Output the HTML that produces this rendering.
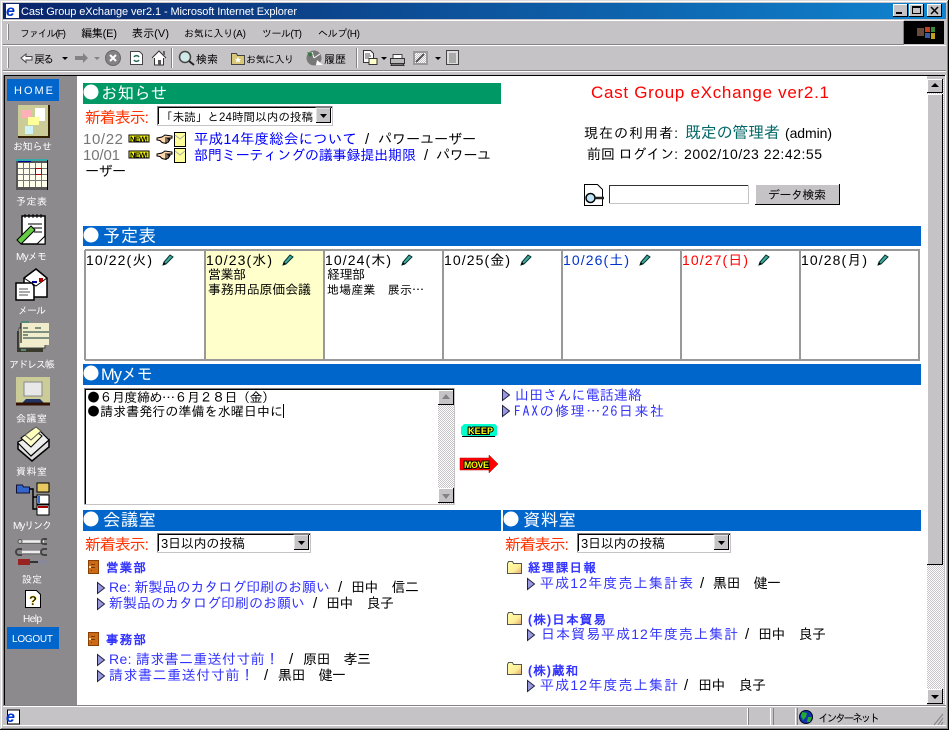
<!DOCTYPE html>
<html lang="ja"><head><meta charset="utf-8"><title>Cast Group eXchange ver2.1</title>
<style>
html,body{margin:0;padding:0;width:949px;height:730px;overflow:hidden;background:#c6c3c6}
svg{display:block}
text{font-family:"Liberation Sans","IPAGothic","Noto Sans CJK JP",sans-serif;white-space:pre}
.cjk{font-family:"IPAGothic","Noto Sans CJK JP",sans-serif}
.s10{font-size:10px}.s11{font-size:11px}.s115{font-size:11.5px}.s12{font-size:12px}.s13{font-size:13px}.s14{font-size:14px}.s145{font-size:14.5px}.s15{font-size:15px}.s16{font-size:16px}.s17{font-size:17px}
.w{fill:#fff}.k{fill:#000}.l{fill:#0000ff}.m{fill:#3333ff}.o{fill:#ff3300}.g{fill:#777}
.b{font-weight:bold;fill:#3333ff;font-size:12.5px}
.h{fill:#fff;font-size:17.5px}
.lab{font-weight:bold;fill:#ffff00;stroke:#000;stroke-width:2px;paint-order:stroke;font-size:9px}
.nw{font-weight:bold;fill:#000;font-size:7.5px}
</style></head><body>
<svg width="949" height="730" viewBox="0 0 949 730" xmlns="http://www.w3.org/2000/svg">
<defs>
<linearGradient id="tb" x1="0" x2="1" y1="0" y2="0"><stop offset="0" stop-color="#0a246a"/><stop offset="1" stop-color="#1084d0"/></linearGradient>
<linearGradient id="fg" x1="0" x2="1" y1="0" y2="1"><stop offset="0" stop-color="#ffffaa"/><stop offset=".6" stop-color="#ffee99"/><stop offset="1" stop-color="#dda870"/></linearGradient>
<pattern id="dith" width="2" height="2" patternUnits="userSpaceOnUse"><rect width="2" height="2" fill="#fff"/><rect width="1" height="1" fill="#c6c3c6"/><rect x="1" y="1" width="1" height="1" fill="#c6c3c6"/></pattern>
<g id="pen"><path d="M1 11l1-3 6-7 3 2-7 7z" fill="#44aa99" stroke="#003333" stroke-width="1"/><path d="M1 11l1-3 2 2z" fill="#000"/></g>
<g id="tri"><path d="M.5 .5l7 5.500-7 5.500z" fill="#9999dd" stroke="#222244" stroke-width="1"/></g>
<g id="hand"><path d="M0 4l5-1 3-2 7 1v2l-4 .5 2 1-1 1.500-1 1-2 1.500-4-1-2-2-3-.5z" fill="#ffd8b0" stroke="#000"/><path d="M8 4h7M8 6h5M8 8h4" stroke="#000"/></g>
<g id="env"><rect x=".5" y=".5" width="11" height="14" fill="#ffff99" stroke="#000"/><path d="M1 3l5 4 5-4" fill="none" stroke="#aaa"/></g>
<g id="door"><rect x="0" y="0" width="11" height="14" fill="#8a4000"/><rect x="1" y="1" width="9" height="12" fill="#cc6a18"/><path d="M3 4.500h4M3 7.500h4M3 10.500h1" stroke="#7a3a00"/><rect x="1" y="6" width="2" height="2" fill="#ffddaa"/></g>
<g id="fold"><path d="M.5 12.500v-10l1-2h4l1 2h8v10z" fill="url(#fg)" stroke="#555"/></g>
<g id="selbtn"><rect width="15" height="15" fill="#c6c3c6"/><path d="M0 15V0h15" fill="none" stroke="#fff"/><path d="M0 14.500h15M14.500 0v15" stroke="#000"/><path d="M4 6h7l-3.500 4z" fill="#000"/></g>
</defs>

<!-- window frame -->
<rect width="949" height="730" fill="#c6c3c6"/>
<path d="M.5 729V.5H948" fill="none" stroke="#ddd"/>
<path d="M0 729.500h949M948.500 0v730" stroke="#000"/>
<path d="M1.500 728V1.500H947" fill="none" stroke="#fff"/>
<path d="M1 728.500h947M947.500 1v728" stroke="#848284"/>

<!-- title bar -->
<rect x="3" y="3" width="943" height="16" fill="url(#tb)"/>
<rect x="6" y="4" width="13" height="14" fill="#fff"/>
<text x="6" y="16" font-size="16" font-weight="bold" fill="#0033cc" font-style="italic">e</text>
<text x="21" y="15" class="s11 w" textLength="276">Cast Group eXchange ver2.1 - Microsoft Internet Explorer</text>
<g>
<rect x="893" y="4" width="15" height="13" fill="#c6c3c6"/><path d="M893.500 16.500v-12h14" fill="none" stroke="#fff"/><path d="M893 16.500h15M907.500 4v13" stroke="#000"/><rect x="896" y="12" width="6" height="2" fill="#000"/>
<rect x="909" y="4" width="15" height="13" fill="#c6c3c6"/><path d="M909.500 16.500v-12h14" fill="none" stroke="#fff"/><path d="M909 16.500h15M923.500 4v13" stroke="#000"/><rect x="912.500" y="6.500" width="8" height="7" fill="none" stroke="#000"/><rect x="912" y="6" width="9" height="2" fill="#000"/>
<rect x="927" y="4" width="15" height="13" fill="#c6c3c6"/><path d="M927.500 16.500v-12h14" fill="none" stroke="#fff"/><path d="M927 16.500h15M941.500 4v13" stroke="#000"/><path d="M931 7l7 7M938 7l-7 7" stroke="#000" stroke-width="1.500"/>
</g>

<!-- menu bar -->
<path d="M3 20.500h901" stroke="#fff"/>
<path d="M3 44.500h901" stroke="#848284"/><path d="M3 45.500h943" stroke="#fff"/>
<path d="M7.500 24v16" stroke="#fff"/><path d="M8.500 24v16" stroke="#848284"/>
<text x="20" y="37" class="s10 k" textLength="46">ファイル(F)</text>
<text x="81" y="37" class="s11 k" textLength="36">編集(E)</text>
<text x="132" y="37" class="s11 k" textLength="37">表示(V)</text>
<text x="184" y="37" class="s10 k" textLength="62">お気に入り(A)</text>
<text x="262" y="37" class="s10 k" textLength="40">ツール(T)</text>
<text x="318" y="37" class="s10 k" textLength="42">ヘルプ(H)</text>
<rect x="904" y="21" width="40" height="23" fill="#000"/>
<rect x="917" y="28" width="7" height="8" fill="#6a4a3a"/><rect x="925" y="27" width="5" height="5" fill="#c04020"/><rect x="931" y="27" width="4" height="5" fill="#3a8a3a"/><rect x="925" y="33" width="5" height="5" fill="#3a5aa0"/><rect x="931" y="33" width="4" height="6" fill="#c0a020"/>
<path d="M903.500 21v23" stroke="#848284"/>

<!-- toolbar -->
<path d="M7.500 48v20" stroke="#fff"/><path d="M8.500 48v20" stroke="#848284"/>
<path d="M3 70.500h943" stroke="#848284"/><path d="M3 71.500h943" stroke="#fff"/>
<path d="M21 58l5-4v2.500h6v3.500h-6v2.500z" fill="#fff" stroke="#444"/>
<text x="34" y="63" class="s11 k" textLength="20">戻る</text>
<path d="M62 57h6l-3 3z" fill="#000"/>
<path d="M88 58l-5-5v3h-8v4h8v3z" fill="#848284"/>
<path d="M94 57h6l-3 3z" fill="#848284"/>
<circle cx="113" cy="58" r="7.500" fill="#848284" stroke="#666"/><path d="M110 55l6 6M116 55l-6 6" stroke="#fff" stroke-width="2"/>
<path d="M130.500 51.500h9l3 3v10h-12z" fill="#fff" stroke="#444"/><path d="M134 57a3 3 0 0 1 5 0M139 60a3 3 0 0 1-5 0" fill="none" stroke="#2a6a5a" stroke-width="1.500"/>
<path d="M152 58l7-7 7 7M154.500 58v7h9v-7" fill="#fff" stroke="#333"/><rect x="163" y="51" width="2" height="4" fill="#666"/><rect x="158" y="60" width="3" height="5" fill="#555"/>
<path d="M171.500 48v20" stroke="#848284"/><path d="M172.500 48v20" stroke="#fff"/>
<circle cx="185" cy="57" r="5.500" fill="#d0e8e8" stroke="#444" stroke-width="1.500"/><path d="M189 61l5 4" stroke="#222" stroke-width="2"/>
<text x="196" y="63" class="s11 k" textLength="22">検索</text>
<path d="M231.500 53.500h5l1 2h7v9h-13z" fill="#d8c878" stroke="#444"/><path d="M238 57l1 2h2l-1.500 1.500.5 2-2-1-2 1 .5-2-1.500-1.500h2z" fill="#fff"/>
<text x="246" y="63" class="s10 k" textLength="48">お気に入り</text>
<circle cx="314" cy="58" r="7.500" fill="#777"/><path d="M314 58l6-4M314 58l-2-6" stroke="#fff"/><path d="M307 52l6 2-3 3z" fill="#2a7a3a"/><path d="M317 60l6 5h-7z" fill="#fff"/>
<text x="324" y="63" class="s11 k" textLength="22">履歴</text>
<path d="M356.500 48v20" stroke="#848284"/><path d="M357.500 48v20" stroke="#fff"/>
<path d="M363.500 50.500h7l3 3v9h-10z" fill="#fff" stroke="#333"/><path d="M365 54h5M365 56h6M365 58h4" stroke="#555"/><path d="M369 58.500h8v6h-8z" fill="#ffffcc" stroke="#333"/><path d="M381 57h6l-3 3z" fill="#000"/>
<path d="M393 54.500h9v4h-9z" fill="#fff" stroke="#444"/><path d="M390.500 58.500h14v5h-14z" fill="#bbb" stroke="#333"/><path d="M392 63.500h11l1 2h-13z" fill="#777" stroke="#333"/>
<rect x="413" y="51" width="15" height="14" fill="#999"/><rect x="415" y="53" width="11" height="10" fill="url(#dith)"/><path d="M416 62l8-8" stroke="#555" stroke-width="2"/>
<path d="M435 57h6l-3 3z" fill="#000"/>
<path d="M446.500 50.500h12v14h-12z" fill="#ddd" stroke="#444"/><path d="M449 54h7M449 56h7M449 58h7M449 60h7M449 62h7" stroke="#777"/>

<!-- content frame -->
<path d="M3.500 75V708" stroke="#848284"/>
<path d="M4 75.500h942" stroke="#000"/><path d="M4.500 76v632" stroke="#000"/>
<path d="M945.500 75v633" stroke="#fff"/>
<rect x="5" y="76" width="922" height="631" fill="#fff"/>
<rect x="5" y="76" width="72" height="631" fill="#8c8a8c"/>
<rect x="927" y="76" width="18" height="631" fill="#c6c3c6"/>

<!-- sidebar -->
<rect x="7" y="79" width="52" height="22" fill="#0066cc"/>
<text x="14" y="94" class="s11 w" textLength="39">HOME</text>
<g>
<rect x="18" y="105" width="31" height="32" fill="#cccc99"/><path d="M18 137h31v-32" fill="none" stroke="#332200" stroke-width="2"/>
<rect x="35" y="108" width="10" height="13" fill="#fff"/><rect x="22" y="110" width="9" height="8" fill="#ffb0b8"/><rect x="28" y="117" width="11" height="8" fill="#ffff99"/><rect x="25" y="126" width="8" height="8" fill="#cff4f8"/>
<text x="13" y="150" class="s10 w" textLength="39">お知らせ</text>
<rect x="16" y="159" width="32" height="31" fill="#555"/><rect x="16" y="159" width="32" height="2" fill="#33aaaa"/><rect x="18" y="161" width="13" height="1" fill="#000099"/>
<rect x="18" y="163" width="29" height="24" fill="#ffffee"/>
<path d="M23.500 163v24M29.500 163v24M35.500 163v24M41.500 163v24M18 168.500h29M18 174.500h29M18 180.500h29" stroke="#777"/>
<rect x="35.500" y="168.500" width="6" height="6" fill="#fff" stroke="#aa0000"/>
<path d="M47.500 160v30" stroke="#000"/>
<text x="16" y="205" class="s10 w" textLength="31">予定表</text>
<rect x="22" y="216" width="23" height="28" fill="#fff" stroke="#000" stroke-width="1.500"/><path d="M25 214v4M29 214v4M33 214v4M37 214v4M41 214v4" stroke="#000"/><path d="M28 224h14M30 228h12M34 232h8" stroke="#000"/>
<path d="M37 244l8-8v8z" fill="#fff" stroke="#000"/>
<path d="M17 240l14-14 4 4-14 14z" fill="#66cc44" stroke="#000"/>
<text x="16" y="260" class="s10 w" textLength="31">Myメモ</text>
<path d="M24 278l12-9 11 9v19H24z" fill="#fff" stroke="#000" stroke-width="1.500"/><path d="M24 278l12 8 11-8" fill="none" stroke="#000"/><rect x="39" y="278" width="4" height="4" fill="#aa0000"/><rect x="32" y="281" width="5" height="2" fill="#000099"/>
<path d="M16 283h16l2 3v14H16z" fill="#fff" stroke="#000" stroke-width="1.500"/><path d="M19 289h9M19 292h11M19 295h9" stroke="#555"/>
<text x="18" y="314" class="s10 w" textLength="28">メール</text>
<rect x="17" y="331" width="26" height="21" fill="#3a3a2a"/><rect x="19" y="328" width="26" height="20" fill="#eeeecc" stroke="#444"/>
<rect x="21" y="323" width="28" height="22" fill="#f0eccc"/><path d="M21 323v20" stroke="#000"/><path d="M23 328h5M35 328h6M23 332h26M23 335h5M23 338h26" stroke="#113333"/><path d="M21 322h8" stroke="#558877" stroke-width="2"/>
<rect x="21" y="349" width="5" height="2" fill="#558877"/>
<text x="9" y="368" class="s10 w" textLength="46">アドレス帳</text>
<rect x="16" y="377" width="34" height="28" fill="#cccc99"/><rect x="24" y="382" width="18" height="14" fill="#e8e8e8" stroke="#888"/><path d="M20 405l6-6h14l6 6z" fill="#223366"/><path d="M16 404h34" stroke="#331100" stroke-width="3"/>
<text x="16" y="422" class="s10 w" textLength="31">会議室</text>
<path d="M18 443v6l14 12 17-14v-7l-17 13z" fill="#ddd" stroke="#000" stroke-width="1.500"/>
<path d="M18 443l13 13 18-16-9-9-22 11z" fill="#eeeeee" stroke="#000" stroke-width="1.200"/>
<path d="M21 438l12-9 9 7-11 11z" fill="#ffffcc" stroke="#000"/><path d="M25 435l11-8 5 4-10 9z" fill="#ffffbb" stroke="#555"/>
<text x="16" y="475" class="s10 w" textLength="31">資料室</text>
<path d="M16.500 485h6l1 2h6v6h-13z" fill="#3366cc" stroke="#113"/><path d="M29 489h4v20h4M33 497h4" fill="none" stroke="#000" stroke-width="1.500"/>
<rect x="37" y="483" width="12" height="9" fill="#e8c860" stroke="#000"/><rect x="37" y="495" width="12" height="9" fill="#fff" stroke="#000"/><rect x="38" y="496" width="2" height="7" fill="#3366cc"/><rect x="37" y="505" width="12" height="10" fill="#fff" stroke="#000"/><rect x="38" y="506" width="10" height="2" fill="#aa0000"/>
<text x="13" y="529" class="s10 w" textLength="39">Myリンク</text>
<path d="M20 541.500h24" stroke="#eee" stroke-width="2.500"/><path d="M20 543.500h24" stroke="#666"/><path d="M47 539h-3a2.500 2.500 0 0 0 0 5h3" fill="none" stroke="#444" stroke-width="2"/><circle cx="20" cy="541.500" r="2" fill="#ccc" stroke="#555"/>
<path d="M22 552h20" stroke="#eee" stroke-width="2.500"/><path d="M22 554h20" stroke="#666"/><path d="M18 549h3a2.500 2.500 0 0 1 0 6h-3" fill="none" stroke="#444" stroke-width="2" transform="matrix(-1 0 0 1 40 0)"/><path d="M47 549h-3a2.500 2.500 0 0 0 0 6h3" fill="none" stroke="#444" stroke-width="2"/>
<rect x="18" y="559" width="12" height="6" fill="#992222"/><path d="M30 562h8" stroke="#333" stroke-width="2"/><rect x="38" y="560" width="10" height="4" fill="#889"/>
<text x="22" y="583" class="s10 w" textLength="20">設定</text>
<path d="M25.500 590.500h11l4 4v13h-15z" fill="#fff" stroke="#000"/>
<text x="29" y="605" font-size="13" font-weight="bold" fill="#000" stroke="#ffdd00" stroke-width=".4">?</text>
<text x="23" y="622" class="s10 w" textLength="19">Help</text>
<rect x="7" y="627" width="52" height="22" fill="#0066cc"/>
<text x="12" y="642" class="s10 w" textLength="41">LOGOUT</text>
</g>

<!-- お知らせ -->
<rect x="83" y="83" width="418" height="21" fill="#009966"/>
<circle cx="91" cy="92" r="7.500" fill="#fff"/>
<text x="101" y="99" class="h" textLength="66" style="font-size:16.5px">お知らせ</text>
<text x="85" y="123" class="s16 o" textLength="64">新着表示:</text>
<rect x="157" y="106" width="176" height="19" fill="#fff"/>
<path d="M157.500 125v-18.500H333" fill="none" stroke="#848284"/><path d="M158.500 124v-16.500H332" fill="none" stroke="#000"/><path d="M157 125.500h176M332.500 106v20" stroke="#c6c3c6"/>
<text x="161" y="121" class="s115 k" textLength="152">「未読」と24時間以内の投稿</text>
<use href="#selbtn" x="316" y="108"/>
<text x="83" y="144" class="s15 g" textLength="40">10/22</text>
<rect x="129" y="135" width="20" height="7" fill="#ffff00" stroke="#000" stroke-width="1"/><text x="130" y="141.500" class="nw" textLength="18">NEW!</text>
<use href="#hand" x="157" y="134"/><use href="#env" x="174" y="132"/>
<text x="194" y="144" class="s145 l" textLength="163">平成14年度総会について</text>
<text x="365" y="144" class="s15 k">/</text>
<text x="378" y="144" class="s14 k" textLength="98">パワーユーザー</text>
<text x="83" y="160" class="s15 g" textLength="37">10/01</text>
<rect x="129" y="151" width="20" height="7" fill="#ffff00" stroke="#000" stroke-width="1"/><text x="130" y="157.500" class="nw" textLength="18">NEW!</text>
<use href="#hand" x="157" y="150"/><use href="#env" x="174" y="148"/>
<text x="194" y="160" class="s14 l" textLength="222">部門ミーティングの議事録提出期限</text>
<text x="424" y="160" class="s15 k">/</text>
<text x="436" y="160" class="s14 k" textLength="55">パワーユ</text>
<text x="85" y="176" class="s14 k" textLength="41">ーザー</text>

<text x="591" y="98" class="s17" fill="#ff0000" textLength="238">Cast Group eXchange ver2.1</text>
<text x="584" y="138" class="s14 k" textLength="94">現在の利用者:</text>
<text x="685" y="138" class="s16" fill="#006666" textLength="95">既定の管理者</text>
<text x="785" y="138" class="s14 k" textLength="47">(admin)</text>
<text x="587" y="159" class="s14 k" textLength="91">前回 ログイン:</text>
<text x="684" y="159" class="s14 k" textLength="138">2002/10/23 22:42:55</text>
<path d="M584.500 184.500h13l5 5v16h-18z" fill="#fff" stroke="#000"/><circle cx="590.500" cy="198" r="4.500" fill="#bfe6f8" stroke="#000" stroke-width="1.500"/><path d="M595 198h9" stroke="#222" stroke-width="2.500"/>
<rect x="609" y="185" width="140" height="19" fill="#fff"/><path d="M609.500 204v-18.500H749" fill="none" stroke="#333"/><path d="M609 203.500h140M748.500 185v19" stroke="#c6c3c6"/>
<rect x="755" y="184" width="85" height="21" fill="#c6c3c6"/><path d="M755.500 205v-20.500H840" fill="none" stroke="#fff"/><path d="M755 204.500h85M839.500 184v21" stroke="#000"/>
<text x="768" y="199" class="s12 k" textLength="58">データ検索</text>

<!-- 予定表 -->
<rect x="83" y="226" width="838" height="20" fill="#0066cc"/>
<circle cx="91" cy="235" r="7.500" fill="#fff"/>
<text x="103" y="242" class="h" textLength="53">予定表</text>
<rect x="84" y="249" width="836" height="112" fill="#fff"/>
<rect x="206" y="251" width="118" height="108" fill="#ffffcc"/>
<path d="M85 250h835M85 360h835M85 250v110M205 250v110M324 250v110M443 250v110M562 250v110M681 250v110M800 250v110M919 250v110" stroke="#999" stroke-width="2" fill="none"/>
<text x="86" y="265" class="s14 k" textLength="66">10/22(火)</text><use href="#pen" x="162" y="254"/>
<text x="206" y="265" class="s14 k" textLength="66">10/23(水)</text><use href="#pen" x="282" y="254"/>
<text x="325" y="265" class="s14 k" textLength="66">10/24(木)</text><use href="#pen" x="401" y="254"/>
<text x="444" y="265" class="s14 k" textLength="66">10/25(金)</text><use href="#pen" x="520" y="254"/>
<text x="563" y="265" class="s14" fill="#0033cc" textLength="66">10/26(土)</text><use href="#pen" x="639" y="254"/>
<text x="682" y="265" class="s14" fill="#ff0000" textLength="66">10/27(日)</text><use href="#pen" x="758" y="254"/>
<text x="801" y="265" class="s14 k" textLength="66">10/28(月)</text><use href="#pen" x="877" y="254"/>
<text x="208" y="279" class="s13 k" textLength="38">営業部</text>
<text x="208" y="294" class="s13 k" textLength="103">事務用品原価会議</text>
<text x="327" y="279" class="s13 k" textLength="38">経理部</text>
<text x="327" y="294" class="s12 k cjk" textLength="97">地場産業　展示…</text>

<!-- Myメモ -->
<rect x="83" y="364" width="838" height="21" fill="#0066cc"/>
<circle cx="91" cy="373" r="7.500" fill="#fff"/>
<text x="101" y="380" class="h" textLength="52" style="font-size:16.5px">Myメモ</text>
<rect x="84" y="388" width="371" height="117" fill="#fff"/>
<path d="M84.500 505V388.500H455" fill="none" stroke="#848284"/><path d="M85.500 504V389.500H454" fill="none" stroke="#000"/><path d="M84 504.500h371M454.500 388v117" stroke="#c6c3c6"/>
<text x="87" y="402" class="s13 k cjk" textLength="188">●６月度締め…６月２８日（金）</text>
<text x="87" y="416" class="s13 k cjk" textLength="196">●請求書発行の準備を水曜日中に</text>
<path d="M283.500 404v14" stroke="#000"/>
<rect x="438" y="390" width="16" height="114" fill="url(#dith)"/>
<rect x="438" y="390" width="16" height="15" fill="#c6c3c6"/><path d="M438.500 405v-14.500H454" fill="none" stroke="#fff"/><path d="M438 404.500h16M453.500 390v15" stroke="#000"/><path d="M446 394l-4 5h8z" fill="#848284"/>
<rect x="438" y="488" width="16" height="15" fill="#c6c3c6"/><path d="M438.500 503v-14.500H454" fill="none" stroke="#fff"/><path d="M438 502.500h16M453.500 488v15" stroke="#000"/><path d="M446 499l-4-5h8z" fill="#848284"/>
<use href="#tri" x="502" y="389"/><text x="515" y="400" class="s14 m" textLength="127">山田さんに電話連絡</text>
<use href="#tri" x="502" y="405"/><text x="514" y="416" class="s14 m cjk" textLength="150">FAXの修理…26日来社</text>
<path d="M464 424h31l2 2v9l-2 2h-31l-3-3v-7z" fill="#00ffcc"/><path d="M462 436.500h33" stroke="#000"/>
<text x="468" y="434" class="lab" textLength="25">KEEP</text>
<path d="M460 458h29v-3l9 9-9 9v-3h-29z" fill="#ff0000" stroke="#a00" stroke-width=".5"/>
<text x="464" y="468" class="lab" textLength="25">MOVE</text>

<!-- 会議室 -->
<rect x="83" y="510" width="418" height="21" fill="#0066cc"/>
<circle cx="91" cy="519" r="7.500" fill="#fff"/>
<text x="103" y="526" class="h" textLength="53">会議室</text>
<text x="85" y="550" class="s16 o" textLength="64">新着表示:</text>
<rect x="157" y="533" width="154" height="19" fill="#fff"/>
<path d="M157.500 552v-18.500H311" fill="none" stroke="#848284"/><path d="M158.500 551v-16.500H310" fill="none" stroke="#000"/><path d="M157 552.500h154M310.500 533v20" stroke="#c6c3c6"/>
<text x="161" y="548" class="s13 k" textLength="84">3日以内の投稿</text>
<use href="#selbtn" x="294" y="535"/>
<use href="#door" x="88" y="560"/><text x="106" y="572" class="b" textLength="40">営業部</text>
<use href="#tri" x="97" y="582"/><text x="109" y="592" class="s14 m" textLength="221">Re: 新製品のカタログ印刷のお願い</text><text x="338" y="592" class="s15 k">/</text><text x="351" y="592" class="s14 k" textLength="68">田中　信二</text>
<use href="#tri" x="97" y="598"/><text x="109" y="608" class="s14 m" textLength="196">新製品のカタログ印刷のお願い</text><text x="313" y="608" class="s15 k">/</text><text x="326" y="608" class="s14 k" textLength="68">田中　良子</text>
<use href="#door" x="88" y="632"/><text x="106" y="644" class="b" textLength="40">事務部</text>
<use href="#tri" x="97" y="654"/><text x="109" y="664" class="s14 m" textLength="170">Re: 請求書二重送付寸前！</text><text x="289" y="664" class="s15 k">/</text><text x="303" y="664" class="s14 k" textLength="68">原田　孝三</text>
<use href="#tri" x="97" y="670"/><text x="109" y="680" class="s14 m" textLength="145">請求書二重送付寸前！</text><text x="264" y="680" class="s15 k">/</text><text x="278" y="680" class="s14 k" textLength="68">黒田　健一</text>

<!-- 資料室 -->
<rect x="503" y="510" width="418" height="21" fill="#0066cc"/>
<circle cx="511" cy="519" r="7.500" fill="#fff"/>
<text x="523" y="526" class="h" textLength="53">資料室</text>
<text x="505" y="550" class="s16 o" textLength="64">新着表示:</text>
<rect x="577" y="533" width="154" height="19" fill="#fff"/>
<path d="M577.500 552v-18.500H731" fill="none" stroke="#848284"/><path d="M578.500 551v-16.500H730" fill="none" stroke="#000"/><path d="M577 552.500h154M730.500 533v20" stroke="#c6c3c6"/>
<text x="581" y="548" class="s13 k" textLength="84">3日以内の投稿</text>
<use href="#selbtn" x="714" y="535"/>
<use href="#fold" x="507" y="561"/><text x="528" y="572" class="b" textLength="68">経理課日報</text>
<use href="#tri" x="527" y="578"/><text x="540" y="588" class="s14 m" textLength="153">平成12年度売上集計表</text><text x="700" y="588" class="s15 k">/</text><text x="713" y="588" class="s14 k" textLength="68">黒田　健一</text>
<use href="#fold" x="507" y="612"/><text x="528" y="624" class="b" textLength="78">(株)日本貿易</text>
<use href="#tri" x="527" y="629"/><text x="541" y="639" class="s14 m" textLength="197">日本貿易平成12年度売上集計</text><text x="745" y="639" class="s15 k">/</text><text x="758" y="639" class="s14 k" textLength="68">田中　良子</text>
<use href="#fold" x="507" y="662"/><text x="528" y="675" class="b" textLength="50">(株)蔵和</text>
<use href="#tri" x="527" y="680"/><text x="540" y="690" class="s14 m" textLength="138">平成12年度売上集計</text><text x="684" y="690" class="s15 k">/</text><text x="698" y="690" class="s14 k" textLength="68">田中　良子</text>

<!-- main scrollbar -->
<rect x="927" y="79" width="17" height="625" fill="url(#dith)"/>
<rect x="927" y="79" width="16" height="14" fill="#c6c3c6"/><path d="M927.500 93V79.500H943" fill="none" stroke="#fff"/><path d="M927 92.500h16M942.500 79v14" stroke="#000"/><path d="M935 83l-4 4h8z" fill="#000"/>
<rect x="927" y="94" width="16" height="471" fill="#c6c3c6"/><path d="M927.500 565V94.500H943" fill="none" stroke="#fff"/><path d="M927 564.500h16M942.500 94v471" stroke="#000"/>
<rect x="927" y="689" width="16" height="15" fill="#c6c3c6"/><path d="M927.500 704v-14.500H943" fill="none" stroke="#fff"/><path d="M927 703.500h16M942.500 689v15" stroke="#000"/><path d="M935 699l-4-4h8z" fill="#000"/>

<!-- status bar -->
<path d="M3 705.500h943" stroke="#848284"/><path d="M3 706.500h943" stroke="#fff"/>
<rect x="3" y="707" width="943" height="20" fill="#c6c3c6"/>
<path d="M3 725.500h943" stroke="#fff"/>
<path d="M7.500 710h12v14h-12z" fill="#fff" stroke="#000"/>
<text x="6" y="722" font-size="16" font-weight="bold" fill="#0033cc" font-style="italic">e</text>
<path d="M747.500 708v17M770.500 708v17M795.500 708v17" stroke="#fff"/>
<path d="M748.500 708v17M773.500 708v17M797.500 708v17" stroke="#848284"/>
<circle cx="806" cy="717" r="6.500" fill="#1133aa" stroke="#002"/><path d="M802 712l5 1-1 4-3 3-2-4zM808 717l4 0-2 5-3 0z" fill="#22aa33"/>
<text x="818" y="722" class="s11 k" textLength="62">インターネット</text>
<path d="M943 714l-9 11M943 718l-5 7M943 722l-2 3" stroke="#848284"/>
</svg>
</body></html>
